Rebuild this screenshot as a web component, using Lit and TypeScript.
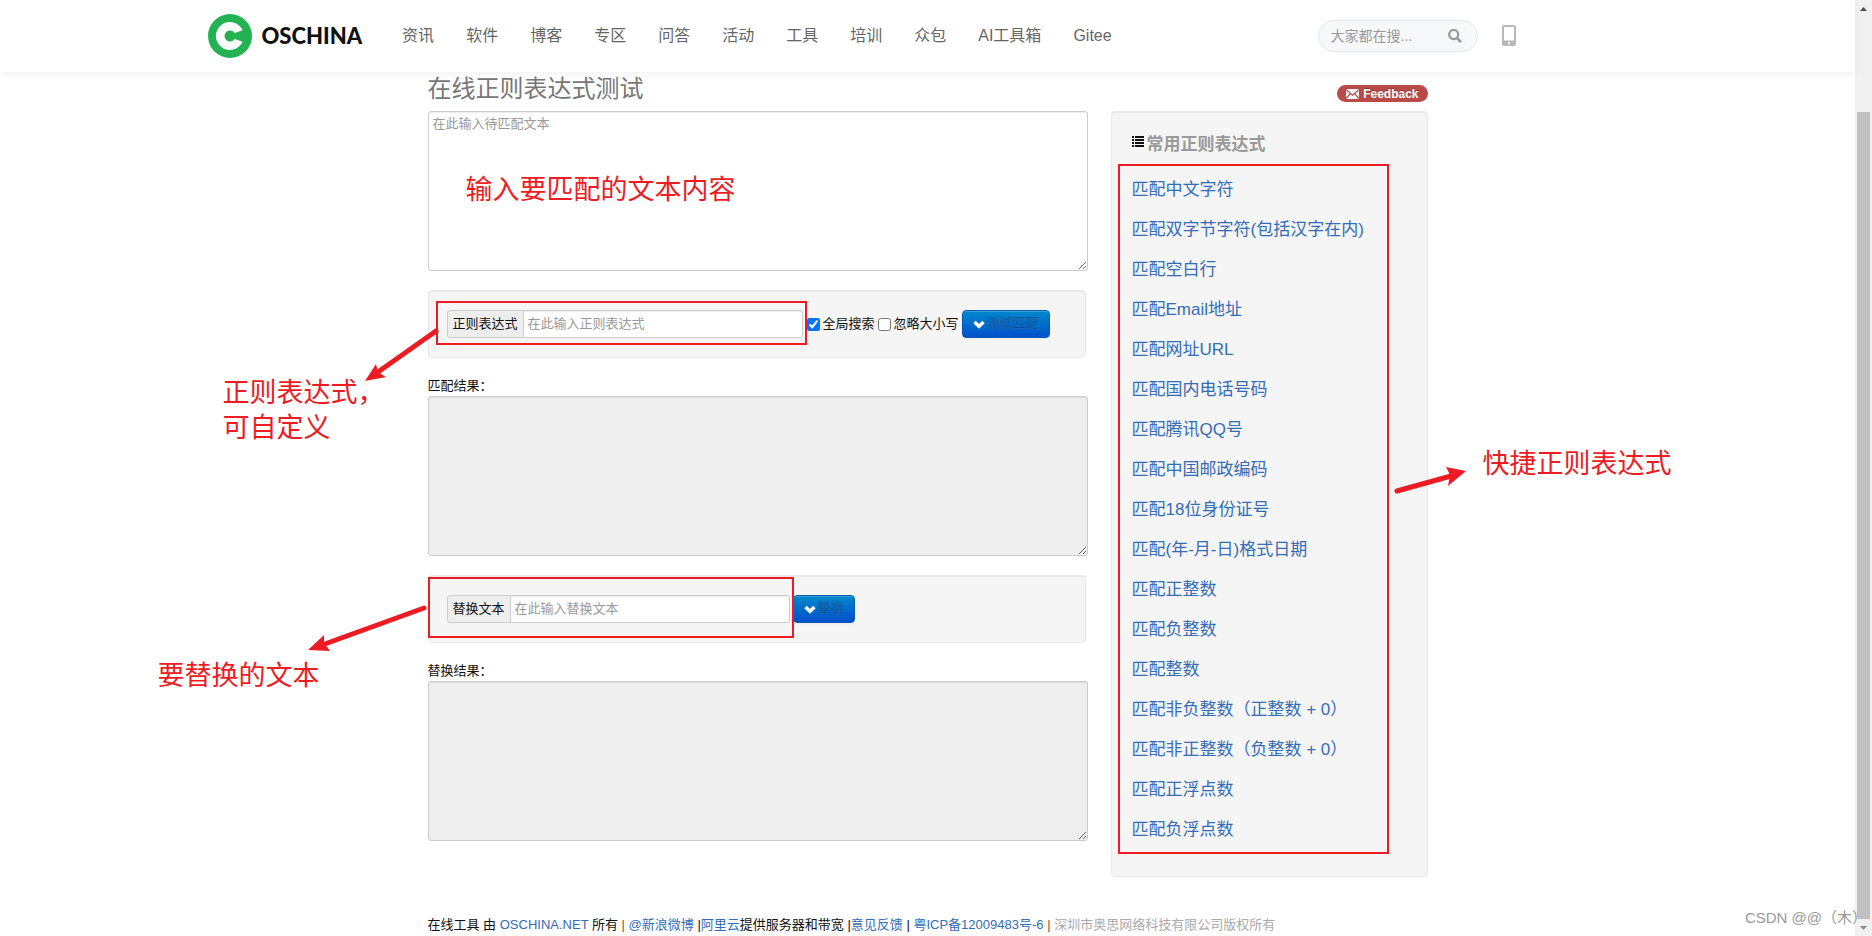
import { LitElement, html, css, svg } from "lit";
import { customElement } from "lit/decorators.js";

const NAV = ["资讯", "软件", "博客", "专区", "问答", "活动", "工具", "培训", "众包", "AI工具箱", "Gitee"];

const PATTERNS = [
  "匹配中文字符",
  "匹配双字节字符(包括汉字在内)",
  "匹配空白行",
  "匹配Email地址",
  "匹配网址URL",
  "匹配国内电话号码",
  "匹配腾讯QQ号",
  "匹配中国邮政编码",
  "匹配18位身份证号",
  "匹配(年-月-日)格式日期",
  "匹配正整数",
  "匹配负整数",
  "匹配整数",
  "匹配非负整数（正整数 + 0）",
  "匹配非正整数（负整数 + 0）",
  "匹配正浮点数",
  "匹配负浮点数",
];

const chevron = svg`<svg class="chev" width="12" height="9" viewBox="0 0 12 9" aria-hidden="true"><path d="M1.500 2 6 6.300l4.500-4.300" fill="none" stroke="#fff" stroke-width="3.400"/></svg>`;

@customElement("site-header")
class SiteHeader extends LitElement {
  static styles = css`
    :host {
      display: block;
      position: relative;
      z-index: 1;
      background: #fff;
      box-shadow: 0 2px 8px rgba(0, 0, 0, 0.06);
    }
    .bar {
      display: flex;
      align-items: center;
      max-width: 1440px;
      height: 72px;
      margin: 0 auto;
    }
    .brand {
      display: flex;
      align-items: center;
      gap: 10px;
      color: #111;
      text-decoration: none;
      font: 900 22px/32px Lato, "Liberation Sans", sans-serif;
    }
    nav {
      display: flex;
      gap: 32px;
      margin-left: 40px;
    }
    nav a {
      color: #666;
      font-size: 16px;
      line-height: 24px;
      text-decoration: none;
      white-space: nowrap;
    }
    .search {
      display: flex;
      align-items: center;
      box-sizing: border-box;
      width: 160px;
      height: 32px;
      margin-left: auto;
      padding: 0 15px 0 12px;
      border: 1px solid #e6e9ec;
      border-radius: 16px;
      background: #f6f8fa;
    }
    .search input {
      flex: 1;
      min-width: 0;
      padding: 0;
      border: 0;
      outline: 0;
      background: none;
      font: inherit;
      font-size: 14px;
    }
    .search input::placeholder {
      color: #999;
    }
    button {
      display: flex;
      padding: 0;
      border: 0;
      background: none;
    }
    .phone {
      display: flex;
      margin: 0 132px 2px 24px;
    }
  `;
  render() {
    return html`<header class="bar">
      <a class="brand" href="#">
        <svg width="44" height="44" viewBox="0 0 44 44" aria-hidden="true">
          <circle cx="22" cy="22" r="22" fill="#24b352" />
          <path d="M34.6 16.2A14 14 0 1 0 34.6 27.8L26.6 25A5.5 5.5 0 1 1 26.6 19Z" fill="#fff" />
        </svg>
        <span>OSCHINA</span>
      </a>
      <nav>${NAV.map((n) => html`<a href="#">${n}</a>`)}</nav>
      <form class="search">
        <input type="text" placeholder="大家都在搜..." aria-label="搜索" />
        <button type="button" aria-label="搜索">
          <svg width="14" height="14" viewBox="0 0 14 14">
            <ellipse cx="5.7" cy="5.6" rx="4.5" ry="4.6" fill="none" stroke="#999" stroke-width="2.2" />
            <path d="m9 9 4 4.2" stroke="#999" stroke-width="2.6" />
          </svg>
        </button>
      </form>
      <a class="phone" href="#" aria-label="手机版">
        <svg width="14" height="21" viewBox="0 0 14 21">
          <path
            fill="#b8b8b8"
            fill-rule="evenodd"
            d="M2 0h10a2 2 0 0 1 2 2v17a2 2 0 0 1-2 2H2a2 2 0 0 1-2-2V2a2 2 0 0 1 2-2Zm.5 2a.5.5 0 0 0-.5.5v13h10v-13a.5.5 0 0 0-.5-.5ZM6 17.2v2h2v-2Z"
          />
        </svg>
      </a>
    </header>`;
  }
}

@customElement("page-scrollbar")
class PageScrollbar extends LitElement {
  static styles = css`
    :host {
      display: flex;
      flex-direction: column;
      align-items: center;
      width: 17px;
      background: #f1f1f1;
    }
    .arrow {
      display: flex;
      align-items: center;
      justify-content: center;
      height: 17px;
    }
    .gap {
      flex: 95;
    }
    .thumb {
      flex: 807;
      width: 13px;
      background: #c1c1c1;
    }
  `;
  render() {
    return html`<div class="arrow">
        <svg width="7" height="4" viewBox="0 0 7 4"><path d="M3.5 0 7 4H0Z" fill="#505050" /></svg>
      </div>
      <div class="gap"></div>
      <div class="thumb"></div>
      <div class="arrow">
        <svg width="7" height="4" viewBox="0 0 7 4"><path d="M0 0h7L3.5 4Z" fill="#8a8a8a" /></svg>
      </div>`;
  }
}

@customElement("app-root")
class AppRoot extends LitElement {
  static styles = css`
    :host {
      display: flex;
      position: relative;
      height: 100vh;
      overflow: hidden;
      background: #fff;
      color: #111;
      font: 13px/20px "Liberation Sans", "Noto Sans CJK SC", sans-serif;
    }
    * {
      box-sizing: border-box;
    }
    a {
      color: #346cb5;
      text-decoration: none;
    }
    .page {
      flex: 1;
      min-width: 0;
    }
    .content {
      position: relative;
      width: 1000px;
      margin: 0 auto;
    }
    .head {
      display: flex;
      justify-content: space-between;
      height: 39px;
    }
    h1 {
      margin: 0;
      color: #777;
      font-size: 24px;
      font-weight: 400;
      line-height: 34px;
    }
    .badge {
      display: flex;
      align-items: center;
      gap: 4px;
      height: 17px;
      margin-top: 13px;
      padding: 0 9px;
      border-radius: 9px;
      background: #b94a48;
      color: #fff;
      font-size: 12px;
      font-weight: 700;
      line-height: 16px;
      text-shadow: 0 -1px 0 rgba(0, 0, 0, 0.25);
    }
    .columns {
      display: grid;
      grid-template-columns: 660px 1fr;
      column-gap: 23px;
      align-items: start;
    }
    textarea {
      display: block;
      width: 100%;
      height: 160px;
      margin: 0;
      padding: 2px 4px;
      border: 1px solid #ccc;
      border-radius: 3px;
      outline: 0;
      box-shadow: inset 0 1px 1px rgba(0, 0, 0, 0.075);
      font: inherit;
    }
    textarea[readonly] {
      background: #eee;
    }
    ::placeholder {
      color: #999;
      opacity: 1;
    }
    .well {
      border: 1px solid #e8e8e8;
      border-radius: 4px;
      background: #f5f5f5;
      box-shadow: inset 0 1px 1px rgba(0, 0, 0, 0.05);
    }
    .row {
      display: flex;
      margin: 19px 2px 18px 0;
      padding: 19px 18px;
    }
    .group {
      display: flex;
      position: relative;
      height: 28px;
      margin-right: 4px;
    }
    .group.close {
      margin-right: 3px;
    }
    .group label {
      padding: 3px 5px;
      border: 1px solid #ccc;
      border-radius: 3px 0 0 3px;
      background: #eee;
      white-space: nowrap;
    }
    .group input {
      width: 280px;
      margin: 0 0 0 -1px;
      padding: 3px 4px;
      border: 1px solid #ccc;
      border-radius: 0 3px 3px 0;
      outline: 0;
      box-shadow: inset 0 1px 1px rgba(0, 0, 0, 0.075);
      font: inherit;
    }
    .check {
      display: flex;
      align-items: center;
      gap: 3px;
      height: 28px;
      margin-right: 3px;
      white-space: nowrap;
    }
    .check input {
      width: 13px;
      height: 13px;
      margin: 1px 0 0;
    }
    .btn {
      display: flex;
      align-items: center;
      gap: 2px;
      height: 28px;
      padding: 0 10px;
      border: 1px solid #0a5ab4;
      border-radius: 4px;
      background: linear-gradient(#0088cc, #0050cc);
      box-shadow: inset 0 1px 0 rgba(255, 255, 255, 0.2), 0 1px 2px rgba(0, 0, 0, 0.05);
      color: #1f62ae;
      font: inherit;
      text-shadow: 0 -1px 0 rgba(0, 0, 0, 0.25);
      white-space: nowrap;
    }
    .caption {
      display: block;
    }
    .side {
      padding: 20px 20px 26px;
    }
    h2 {
      display: flex;
      align-items: center;
      gap: 3px;
      margin: 0 0 12px;
      color: #999;
      font-size: 17px;
      font-weight: 700;
      line-height: 26px;
    }
    h2 svg {
      margin-bottom: 7px;
    }
    ul {
      position: relative;
      margin: 0;
      padding: 0;
      list-style: none;
    }
    li {
      font-size: 17px;
      line-height: 40px;
      white-space: nowrap;
    }
    footer {
      margin-top: 38px;
      white-space: nowrap;
    }
    .muted {
      color: #aaa;
    }
    .sep {
      color: #b04030;
    }
    .frame {
      position: absolute;
      border: 2px solid #ed1c24;
      pointer-events: none;
    }
    .frame.regex {
      inset: -9px -4px -7px -11px;
    }
    .frame.replace {
      inset: -18px -4px -15px -19px;
    }
    .frame.list {
      inset: -6px 18px -4px -14px;
    }
    .note {
      position: absolute;
      color: #ed1c24;
      font-size: 27px;
      line-height: 35px;
      white-space: nowrap;
      pointer-events: none;
    }
    .n1 { left: 38px; top: 101px; }
    .n2 { left: -205px; top: 304px; }
    .n3 { left: -270px; top: 587px; }
    .n4 { left: 1055px; top: 375px; }
    .arrows {
      position: absolute;
      left: 0;
      top: 0;
      overflow: visible;
      pointer-events: none;
    }
    .mark {
      position: absolute;
      right: 5px;
      bottom: 6px;
      color: #999;
      font-size: 15px;
      line-height: 24px;
      white-space: nowrap;
    }
  `;
  render() {
    return html`
      <div class="page">
        <site-header></site-header>
        <div class="content">
          <div class="head">
            <h1>在线正则表达式测试</h1>
            <a class="badge" href="#">
              <svg width="13" height="10" viewBox="0 0 13 10" aria-hidden="true">
                <path d="M0 0h13v10H0Z" fill="#fff" />
                <path d="m0 .5 6.5 5.8L13 .5M0 9.5l4.5-5M13 9.500 8.500 4.500" fill="none" stroke="#b94a48" stroke-width="1.2" />
              </svg>
              <span>Feedback</span>
            </a>
          </div>
          <div class="columns">
            <main>
              <textarea placeholder="在此输入待匹配文本" aria-label="待匹配文本"></textarea>
              <div class="well row">
                <div class="group">
                  <label for="regex">正则表达式</label>
                  <input id="regex" type="text" placeholder="在此输入正则表达式" />
                  <span class="frame regex"></span>
                </div>
                <label class="check"><input type="checkbox" checked />全局搜索</label>
                <label class="check"><input type="checkbox" />忽略大小写</label>
                <button class="btn" type="button">${chevron}<span>测试匹配</span></button>
              </div>
              <label class="caption" for="matched">匹配结果：</label>
              <textarea id="matched" readonly></textarea>
              <div class="well row">
                <div class="group close">
                  <label for="replacement">替换文本</label>
                  <input id="replacement" type="text" placeholder="在此输入替换文本" />
                  <span class="frame replace"></span>
                </div>
                <button class="btn" type="button">${chevron}<span>替换</span></button>
              </div>
              <label class="caption" for="replaced">替换结果：</label>
              <textarea id="replaced" readonly></textarea>
            </main>
            <aside class="well side">
              <h2>
                <svg width="12" height="11" viewBox="0 0 12 11" aria-hidden="true">
                  <path d="M0 1h2m1 0h9M0 4h2m1 0h9M0 7h2m1 0h9M0 10h2m1 0h9" stroke="#111" stroke-width="2" />
                </svg>
                常用正则表达式
              </h2>
              <ul>
                ${PATTERNS.map((p) => html`<li><a href="#">${p}</a></li>`)}
                <span class="frame list"></span>
              </ul>
            </aside>
          </div>
          <footer>
            在线工具 由 <a href="#">OSCHINA.NET</a> 所有 <span class="sep">|</span> <a href="#">@新浪微博</a> |<a href="#">阿里云</a>提供服务器和带宽
            |<a href="#">意见反馈</a> | <a href="#">粤ICP备12009483号-6</a> <span class="sep">|</span>
            <span class="muted">深圳市奥思网络科技有限公司版权所有</span>
          </footer>
          <svg class="arrows" width="1" height="1" aria-hidden="true">
            <g fill="#ed1c24" stroke="#ed1c24" stroke-linecap="round">
              <path d="M8 259-50 300M-4 536-106 573M969 419l54-15" stroke-width="5" />
              <path d="m-63 309 11-17 2 8 8 5Zm-57 269 16-15v8l6 8ZM1038 399l-20-4 4 8-2 11Z" stroke="none" />
            </g>
          </svg>
          <div class="note n1">输入要匹配的文本内容</div>
          <div class="note n2">正则表达式，<br />可自定义</div>
          <div class="note n3">要替换的文本</div>
          <div class="note n4">快捷正则表达式</div>
        </div>
      </div>
      <page-scrollbar></page-scrollbar>
      <div class="mark">CSDN @@（木）</div>
    `;
  }
}
